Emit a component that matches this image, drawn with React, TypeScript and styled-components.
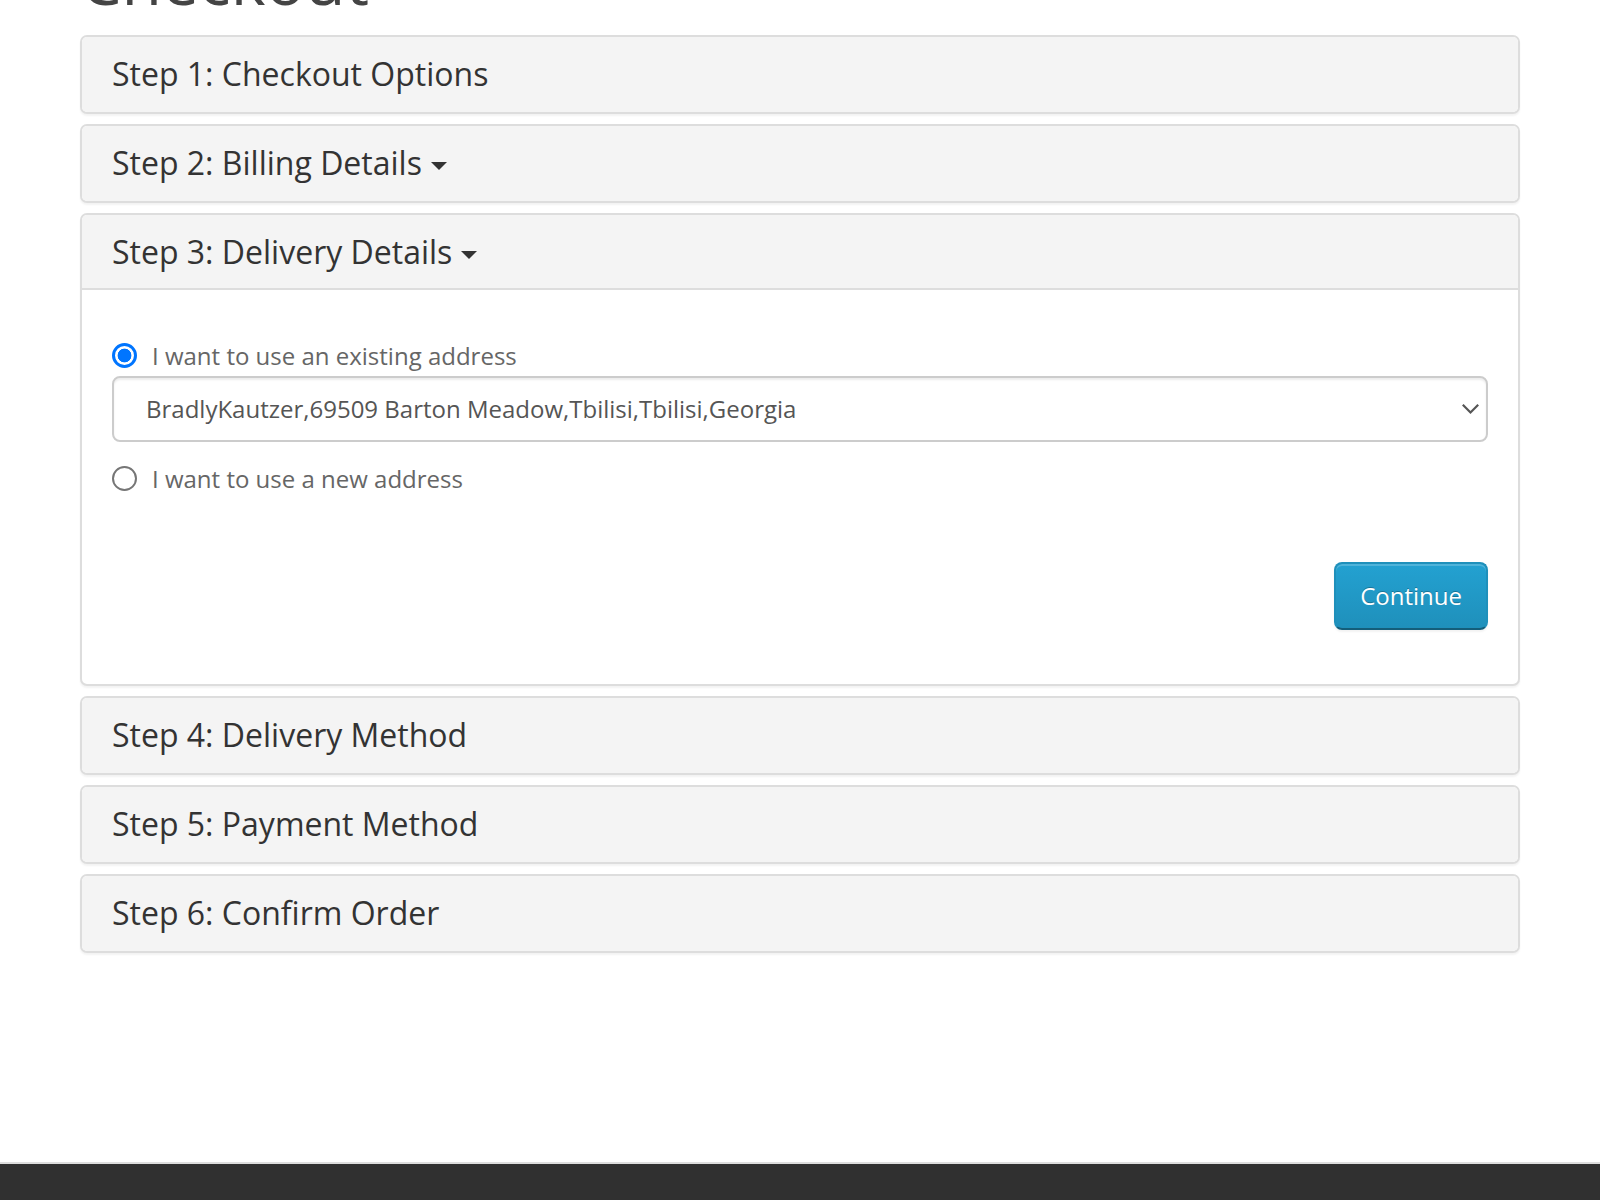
import React from 'react';
import styled, { createGlobalStyle } from 'styled-components';

const GlobalStyle = createGlobalStyle`
  html, body {
    margin: 0;
    padding: 0;
    background: #fff;
  }
  body {
    font-family: "Open Sans", "Liberation Sans", sans-serif;
    font-size: 24px;
    line-height: 1.42857;
    color: #666;
    overflow: hidden;
  }
  *, *::before, *::after {
    box-sizing: border-box;
  }
`;

const Page = styled.div`
  display: flex;
  flex-direction: column;
  min-height: 1200px;
`;

const Container = styled.main`
  width: 1500px;
  margin: -57px auto 0;
  padding: 0 30px;
`;

const Title = styled.h1`
  margin: 0 0 19px;
  font-size: 66px;
  line-height: 72.6px;
  font-weight: 400;
  color: #444;
`;

const PanelGroup = styled.div`
  display: flex;
  flex-direction: column;
  gap: 10px;
`;

const Panel = styled.section`
  border: 2px solid #ddd;
  border-radius: 7px;
  background: #fff;
  box-shadow: 0 2px 2px rgba(0, 0, 0, 0.05);
  overflow: hidden;
`;

const PanelHeading = styled.div<{ $open?: boolean }>`
  background: #f4f4f4;
  padding: 20px 30px;
  border-bottom: 2px solid ${(p) => (p.$open ? '#ddd' : 'transparent')};
`;

const PanelTitle = styled.h4`
  margin: 0;
  font-size: 32px;
  line-height: 33px;
  font-weight: 400;
  color: #333;
`;

const Caret = styled.span`
  display: inline-block;
  width: 0;
  height: 0;
  margin-left: 9px;
  vertical-align: middle;
  border-top: 8px solid #333;
  border-left: 8px solid transparent;
  border-right: 8px solid transparent;
`;

const PanelBody = styled.div`
  padding: 49px 30px 54px;
  display: flex;
  flex-direction: column;
`;

const RadioRow = styled.label<{ $gap?: number }>`
  display: flex;
  align-items: center;
  gap: 15px;
  height: 34px;
  margin-top: ${(p) => p.$gap ?? 0}px;
  color: #666;
  font-size: 24px;
  line-height: 34px;
  cursor: pointer;
`;

const Radio = styled.input.attrs({ type: 'radio' })`
  appearance: none;
  -webkit-appearance: none;
  margin: 0;
  width: 25px;
  height: 25px;
  flex: none;
  border-radius: 50%;
  border: 2px solid #767676;
  background: #fff;

  &:checked {
    border: 3px solid #0075ff;
    background: radial-gradient(circle, #0075ff 0 6.6px, #fff 7.2px);
  }
`;

const SelectWrap = styled.div`
  position: relative;
  margin-top: 3px;
`;

const Select = styled.select`
  appearance: none;
  -webkit-appearance: none;
  width: 100%;
  height: 66px;
  margin: 0;
  padding: 0 60px 0 32px;
  border: 2px solid #ccc;
  border-radius: 8px;
  background: #fff;
  font-family: "Open Sans", "Liberation Sans", sans-serif;
  font-size: 24px;
  color: #555;
  box-shadow: inset 0 2px 2px rgba(0, 0, 0, 0.075);
  outline: none;
`;

const Chevron = styled.svg`
  position: absolute;
  right: 8px;
  top: 50%;
  margin-top: -6px;
  pointer-events: none;
`;

const Buttons = styled.div`
  display: flex;
  justify-content: flex-end;
  margin-top: 66px;
`;

const PrimaryButton = styled.button`
  height: 68px;
  padding: 0 24px;
  border: 2px solid;
  border-color: #1f90bb #1f90bb #145e7a;
  border-radius: 8px;
  background: linear-gradient(to bottom, #23a1d1, #1f90bb);
  box-shadow: inset 0 2px 0 rgba(255, 255, 255, 0.2), 0 2px 2px rgba(0, 0, 0, 0.05);
  font-family: "Open Sans", "Liberation Sans", sans-serif;
  font-size: 24px;
  line-height: 34px;
  color: #fff;
  text-shadow: 0 -1px 0 rgba(0, 0, 0, 0.25);
  cursor: pointer;
`;

const Footer = styled.footer`
  margin-top: 209px;
  flex: 1;
  min-height: 300px;
  background: #303030;
  border-top: 2px solid #ddd;
`;

type Step = { title: string; caret?: boolean; open?: boolean };

const steps: Step[] = [
  { title: 'Step 1: Checkout Options' },
  { title: 'Step 2: Billing Details', caret: true },
  { title: 'Step 3: Delivery Details', caret: true, open: true },
  { title: 'Step 4: Delivery Method' },
  { title: 'Step 5: Payment Method' },
  { title: 'Step 6: Confirm Order' },
];

function DeliveryBody() {
  return (
    <PanelBody>
      <RadioRow>
        <Radio name="shipping_address" value="existing" defaultChecked />
        I want to use an existing address
      </RadioRow>
      <SelectWrap>
        <Select defaultValue="1">
          <option value="1">BradlyKautzer,69509 Barton Meadow,Tbilisi,Tbilisi,Georgia</option>
        </Select>
        <Chevron width="19" height="12" viewBox="0 0 19 12">
          <path d="M1.8 1.8 L9.5 9.5 L17.2 1.8" fill="none" stroke="#555" strokeWidth="2.2" />
        </Chevron>
      </SelectWrap>
      <RadioRow $gap={20}>
        <Radio name="shipping_address" value="new" />
        I want to use a new address
      </RadioRow>
      <Buttons>
        <PrimaryButton type="button">Continue</PrimaryButton>
      </Buttons>
    </PanelBody>
  );
}

export default function App() {
  return (
    <Page>
      <GlobalStyle />
      <Container>
        <Title>Checkout</Title>
        <PanelGroup>
          {steps.map((s) => (
            <Panel key={s.title}>
              <PanelHeading $open={s.open}>
                <PanelTitle>
                  {s.title}
                  {s.caret && <Caret />}
                </PanelTitle>
              </PanelHeading>
              {s.open && <DeliveryBody />}
            </Panel>
          ))}
        </PanelGroup>
      </Container>
      <Footer />
    </Page>
  );
}
